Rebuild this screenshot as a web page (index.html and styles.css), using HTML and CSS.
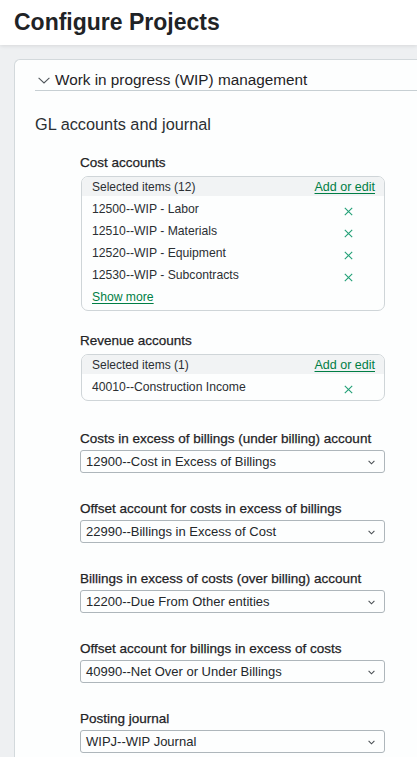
FILE: index.html
```html
<!DOCTYPE html>
<html lang="en">
<head>
<meta charset="utf-8">
<title>Configure Projects</title>
<link rel="stylesheet" href="styles.css">
</head>
<body>
<header class="page-header">
  <h1 class="page-title">Configure Projects</h1>
</header>
<main class="page-body">
  <section class="card">
    <div class="section-head">
      <svg class="chevron" width="12" height="7" viewBox="0 0 12 7"><path d="M0.6 0.8 L6 6 L11.4 0.8" fill="none" stroke="#50565b" stroke-width="1.1"/></svg>
      <span class="section-title">Work in progress (WIP) management</span>
    </div>
    <h2 class="group-title">GL accounts and journal</h2>
    <div class="fields">
      <div class="field">
        <div class="field-label">Cost accounts</div>
        <div class="multi">
          <div class="multi-head"><span>Selected items (12)</span><a class="link" href="#">Add or edit</a></div>
          <div class="multi-list">
            <div class="multi-row"><span>12500--WIP - Labor</span><svg class="x" width="9" height="9" viewBox="0 0 9 9"><path d="M0.8 0.8 L8.2 8.2 M8.2 0.8 L0.8 8.2" stroke="#23a077" stroke-width="1.1"/></svg></div>
            <div class="multi-row"><span>12510--WIP - Materials</span><svg class="x" width="9" height="9" viewBox="0 0 9 9"><path d="M0.8 0.8 L8.2 8.2 M8.2 0.8 L0.8 8.2" stroke="#23a077" stroke-width="1.1"/></svg></div>
            <div class="multi-row"><span>12520--WIP - Equipment</span><svg class="x" width="9" height="9" viewBox="0 0 9 9"><path d="M0.8 0.8 L8.2 8.2 M8.2 0.8 L0.8 8.2" stroke="#23a077" stroke-width="1.1"/></svg></div>
            <div class="multi-row"><span>12530--WIP - Subcontracts</span><svg class="x" width="9" height="9" viewBox="0 0 9 9"><path d="M0.8 0.8 L8.2 8.2 M8.2 0.8 L0.8 8.2" stroke="#23a077" stroke-width="1.1"/></svg></div>
            <div class="multi-more"><a class="link" href="#">Show more</a></div>
          </div>
        </div>
      </div>
      <div class="field field-rev">
        <div class="field-label">Revenue accounts</div>
        <div class="multi">
          <div class="multi-head"><span>Selected items (1)</span><a class="link" href="#">Add or edit</a></div>
          <div class="multi-list">
            <div class="multi-row"><span>40010--Construction Income</span><svg class="x" width="9" height="9" viewBox="0 0 9 9"><path d="M0.8 0.8 L8.2 8.2 M8.2 0.8 L0.8 8.2" stroke="#23a077" stroke-width="1.1"/></svg></div>
          </div>
        </div>
      </div>
      <div class="field field-select first-select">
        <div class="field-label">Costs in excess of billings (under billing) account</div>
        <div class="select"><span>12900--Cost in Excess of Billings</span><svg class="caret" width="7" height="5" viewBox="0 0 7 5"><path d="M0.6 0.9 L3.5 3.8 L6.4 0.9" fill="none" stroke="#4a4f54" stroke-width="1.1"/></svg></div>
      </div>
      <div class="field field-select">
        <div class="field-label">Offset account for costs in excess of billings</div>
        <div class="select"><span>22990--Billings in Excess of Cost</span><svg class="caret" width="7" height="5" viewBox="0 0 7 5"><path d="M0.6 0.9 L3.5 3.8 L6.4 0.9" fill="none" stroke="#4a4f54" stroke-width="1.1"/></svg></div>
      </div>
      <div class="field field-select">
        <div class="field-label">Billings in excess of costs (over billing) account</div>
        <div class="select"><span>12200--Due From Other entities</span><svg class="caret" width="7" height="5" viewBox="0 0 7 5"><path d="M0.6 0.9 L3.5 3.8 L6.4 0.9" fill="none" stroke="#4a4f54" stroke-width="1.1"/></svg></div>
      </div>
      <div class="field field-select">
        <div class="field-label">Offset account for billings in excess of costs</div>
        <div class="select"><span>40990--Net Over or Under Billings</span><svg class="caret" width="7" height="5" viewBox="0 0 7 5"><path d="M0.6 0.9 L3.5 3.8 L6.4 0.9" fill="none" stroke="#4a4f54" stroke-width="1.1"/></svg></div>
      </div>
      <div class="field field-select">
        <div class="field-label">Posting journal</div>
        <div class="select"><span>WIPJ--WIP Journal</span><svg class="caret" width="7" height="5" viewBox="0 0 7 5"><path d="M0.6 0.9 L3.5 3.8 L6.4 0.9" fill="none" stroke="#4a4f54" stroke-width="1.1"/></svg></div>
      </div>
    </div>
  </section>
</main>
</body>
</html>
```

FILE: styles.css
```css
* { box-sizing: border-box; }
html, body { margin: 0; padding: 0; }
body {
  background: #eef0f2;
  font-family: "Liberation Sans", Arial, sans-serif;
  color: #2b2f33;
  overflow: hidden;
  width: 417px;
  height: 757px;
}
.page-header {
  background: #fff;
  height: 45px;
  padding: 0 14px;
  box-shadow: 0 1px 4px rgba(0,0,0,0.10);
  position: relative;
  z-index: 1;
}
.page-title {
  margin: 0;
  font-size: 23px;
  font-weight: bold;
  line-height: 44px;
  color: #1f2326;
}
.page-body {
  padding: 14px 0 0 14px;
}
.card {
  background: #fdfefe;
  border: 1px solid #d3d9dc;
  border-right: none;
  border-bottom: none;
  border-radius: 6px 0 0 0;
  padding: 9px 0 0 20px;
  height: 720px;
}
.section-head {
  display: flex;
  align-items: center;
  height: 22px;
  border-bottom: 1px solid #c7cfd3;
  padding-left: 3px;
}
.chevron { margin-right: 5px; margin-top: 2px; flex: none; }
.section-title {
  font-size: 15.3px;
  color: #1f2326;
}
.group-title {
  margin: 23px 0 0 0;
  font-size: 16.3px;
  font-weight: normal;
  line-height: 20px;
  color: #2b2f33;
}
.fields {
  padding-left: 45px;
  width: 350px;
  margin-top: 21px;
}
.field-label {
  font-size: 13.5px;
  color: #1f2326;
  line-height: 16px;
  margin-bottom: 5px;
  -webkit-text-stroke: 0.25px #1f2326;
  white-space: nowrap;
}
.multi {
  margin-left: 1px;
  border: 1px solid #cfd5d8;
  border-radius: 7px;
  overflow: hidden;
  font-size: 12.2px;
  color: #2b2f33;
}
.multi-head {
  display: flex;
  justify-content: space-between;
  align-items: center;
  background: #f1f3f4;
  height: 19px;
  padding: 0 9px 0 10px;
  font-size: 12px;
}
.multi-list {
  padding: 2px 0 2px 0;
}
.link {
  color: #007e45;
  text-decoration: underline;
  text-underline-offset: 2px;
  text-decoration-thickness: 1px;
  font-size: 12.5px;
}
.multi-row {
  display: flex;
  justify-content: space-between;
  align-items: center;
  height: 22px;
  padding: 0 31px 0 10px;
}
.x { flex: none; margin-top: 4px; }
.multi-more {
  height: 22px;
  padding: 0 0 0 10px;
  line-height: 22px;
}
.multi-more .link { font-size: 12.2px; }
.field-rev { margin-top: 22px; }
.first-select { margin-top: 30px; }
.field-select { margin-bottom: 28px; }
.field-select .field-label { margin-bottom: 3px; }
.select {
  display: flex;
  justify-content: space-between;
  align-items: center;
  height: 23px;
  border: 1px solid #aeb6bb;
  border-radius: 3px;
  padding: 0 9px 0 5px;
  font-size: 13px;
  color: #24282b;
}
.caret { margin-top: 1px; flex: none; }
```
